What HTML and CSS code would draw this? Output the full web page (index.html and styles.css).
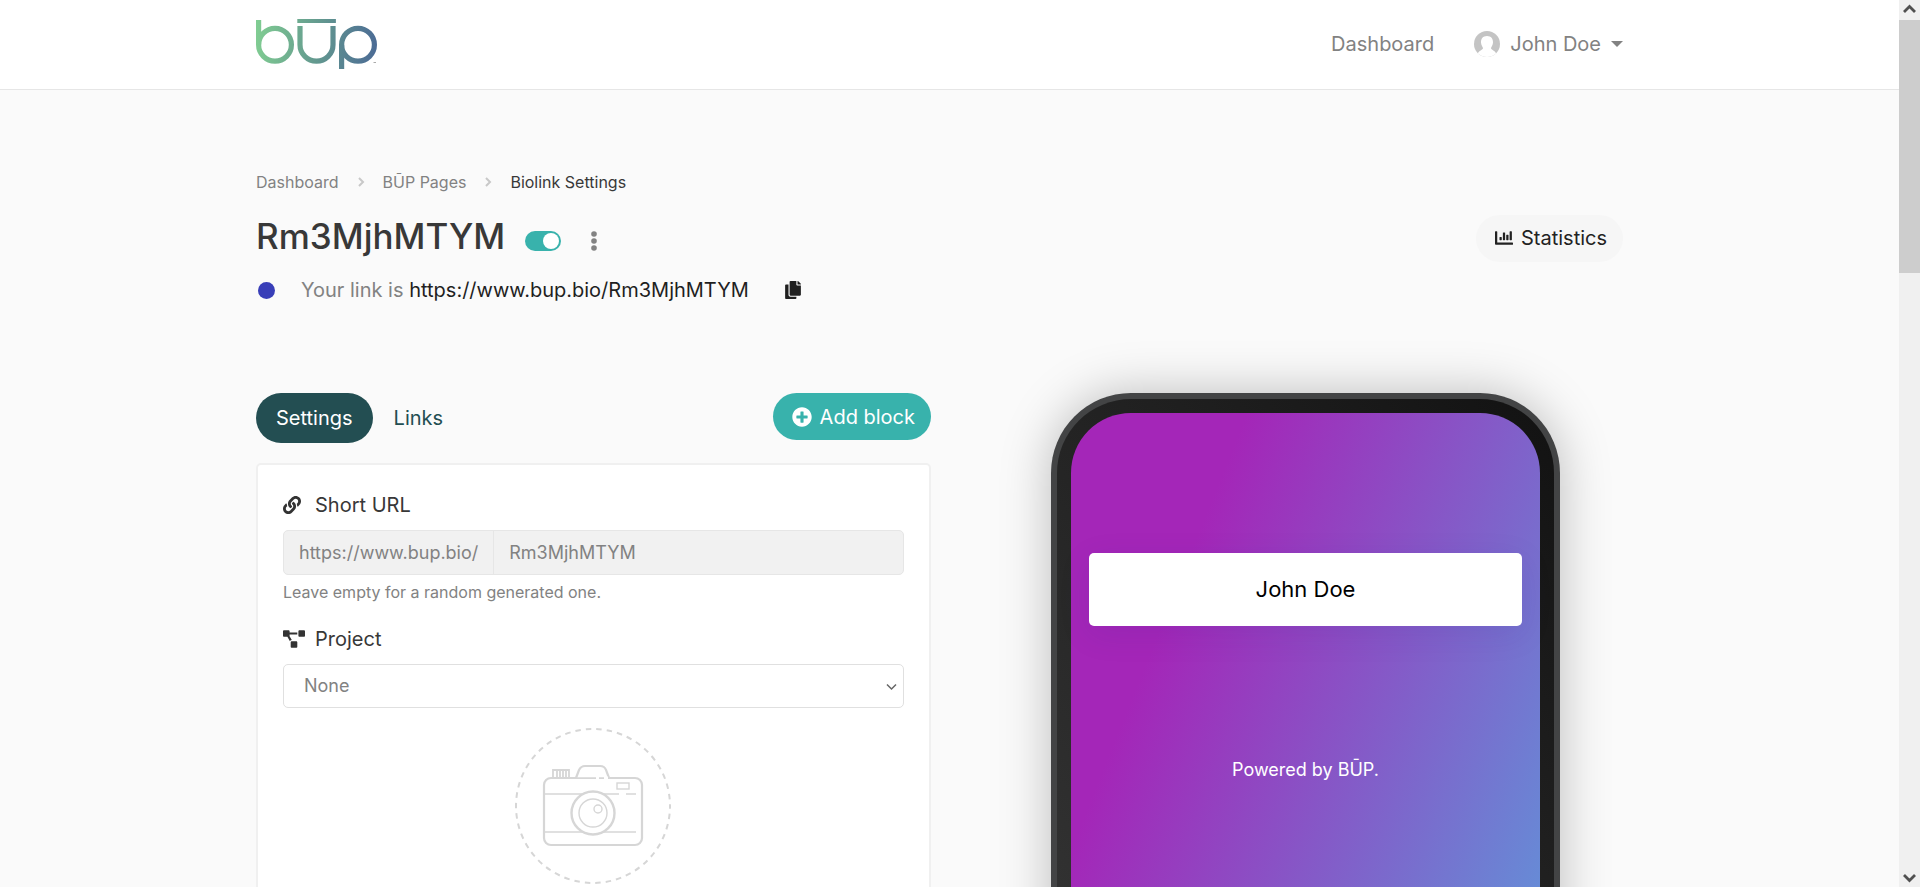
FILE: index.html
```html
<!DOCTYPE html>
<html lang="en">
<head>
<meta charset="utf-8">
<title>Biolink Settings</title>
<link rel="stylesheet" href="styles.css">
</head>
<body>
<div class="shell">
<div class="page">
  <header class="navbar">
    <div class="container navbar-inner">
      <a class="logo" href="#" aria-label="Home">
        <svg width="122" height="52" viewBox="0 0 122 52" fill="none" stroke="url(#brand)" stroke-width="5.2">
          <defs><linearGradient id="brand" gradientUnits="userSpaceOnUse" x1="0" y1="20" x2="122" y2="32"><stop offset="0" stop-color="#80cc92"/><stop offset=".5" stop-color="#63998f"/><stop offset="1" stop-color="#4b6a95"/></linearGradient></defs>
          <path d="M2.6 2v24.7"/><circle cx="19" cy="26.7" r="16.4"/>
          <path stroke-width="4.2" d="M41.3 3h38.6"/>
          <path d="M44 8v18.7a16.5 16.5 0 0 0 33 0V8"/>
          <circle cx="102" cy="26.7" r="16.4"/><path d="M85.6 26.7V51"/>
          <path stroke="#aaa" stroke-width="1" d="M117.500 44.500h2.500"/>
        </svg>
      </a>
      <nav class="nav-links">
        <a href="#">Dashboard</a>
        <a class="account" href="#">
          <svg width="26" height="26" viewBox="0 0 26 26"><defs><clipPath id="round"><circle cx="13" cy="13" r="13"/></clipPath></defs><g clip-path="url(#round)"><path fill="#c4c4c4" d="M0 0h26v26H0z"/><path fill="#fff" d="M13 5c4 0 6.200 2.800 6 6.500-.2 2.600-1.200 3.500-2 5.500 0 2 4 2 6 7l-2 2H5l-2-2c2-5 6-5 6-7-.8-2-1.800-2.900-2-5.500C6.800 7.800 9 5 13 5z"/></g></svg>
          <span>John Doe</span>
          <span class="caret"></span>
        </a>
      </nav>
    </div>
  </header>

  <main class="container main">
    <nav class="breadcrumb" aria-label="Breadcrumb">
      <a href="#">Dashboard</a>
      <svg width="7" height="10" viewBox="0 0 7 10"><path d="M1 1l4 4-4 4" fill="none" stroke="#c8c8c8" stroke-width="2"/></svg>
      <a href="#">BŪP Pages</a>
      <svg width="7" height="10" viewBox="0 0 7 10"><path d="M1 1l4 4-4 4" fill="none" stroke="#c8c8c8" stroke-width="2"/></svg>
      <span class="current">Biolink Settings</span>
    </nav>

    <div class="heading">
      <div class="heading-left">
        <h1>Rm3MjhMTYM</h1>
        <input class="switch" type="checkbox" checked aria-label="Enabled">
        <button class="icon-button" type="button" aria-label="More">
          <svg width="6" height="20" viewBox="0 0 6 20" fill="#828282"><circle cx="3" cy="3" r="2.800"/><circle cx="3" cy="10" r="2.800"/><circle cx="3" cy="17" r="2.800"/></svg>
        </button>
      </div>
      <a class="button button-light" href="#">
        <svg width="18" height="18" viewBox="0 0 512 512" fill="#222"><path d="M332.800 320h38.400c6.400 0 12.800-6.400 12.800-12.800V172.800c0-6.400-6.400-12.800-12.800-12.800h-38.400c-6.400 0-12.800 6.400-12.800 12.800v134.400c0 6.400 6.400 12.800 12.800 12.800zm96 0h38.400c6.400 0 12.800-6.400 12.800-12.800V76.800c0-6.400-6.400-12.800-12.800-12.800h-38.400c-6.400 0-12.800 6.400-12.800 12.800v230.400c0 6.400 6.400 12.800 12.800 12.800zm-288 0h38.400c6.400 0 12.800-6.400 12.800-12.800v-70.400c0-6.400-6.400-12.800-12.800-12.800h-38.400c-6.400 0-12.800 6.400-12.800 12.800v70.400c0 6.400 6.400 12.800 12.800 12.800zm96 0h38.400c6.400 0 12.800-6.400 12.800-12.800V108.800c0-6.400-6.400-12.800-12.800-12.800h-38.400c-6.400 0-12.800 6.400-12.800 12.800v198.400c0 6.400 6.400 12.800 12.800 12.800zM496 384H64V80c0-8.840-7.160-16-16-16H16C7.160 64 0 71.160 0 80v336c0 17.670 14.330 32 32 32h464c8.840 0 16-7.160 16-16v-32c0-8.840-7.160-16-16-16z"/></svg>
        <span>Statistics</span>
      </a>
    </div>

    <div class="link-row">
      <span class="dot"></span>
      <p>Your link is <a href="#">https://www.bup.bio/Rm3MjhMTYM</a></p>
      <button class="icon-button" type="button" aria-label="Copy">
        <svg width="16" height="18" viewBox="0 0 448 512" fill="#1f1f1f"><path d="M320 448v40c0 13.255-10.745 24-24 24H24c-13.255 0-24-10.745-24-24V120c0-13.255 10.745-24 24-24h72v296c0 30.879 25.121 56 56 56h168zm0-344V0H152c-13.255 0-24 10.745-24 24v368c0 13.255 10.745 24 24 24h272c13.255 0 24-10.745 24-24V128H344c-13.200 0-24-10.800-24-24zm120.971-31.029L375.029 7.029A24 24 0 0 0 358.059 0H352v96h96v-6.059a24 24 0 0 0-7.029-16.970z"/></svg>
      </button>
    </div>

    <div class="columns">
      <section>
        <div class="toolbar">
          <div class="tabs">
            <a class="tab active" href="#">Settings</a>
            <a class="tab" href="#">Links</a>
          </div>
          <button class="button button-primary" type="button">
            <svg width="20" height="20" viewBox="0 0 512 512" fill="#fff"><path d="M256 8C119 8 8 119 8 256s111 248 248 248 248-111 248-248S393 8 256 8zm144 276c0 6.600-5.400 12-12 12h-92v92c0 6.600-5.400 12-12 12h-56c-6.600 0-12-5.400-12-12v-92h-92c-6.600 0-12-5.400-12-12v-56c0-6.600 5.400-12 12-12h92v-92c0-6.600 5.400-12 12-12h56c6.600 0 12 5.400 12 12v92h92c6.600 0 12 5.400 12 12v56z"/></svg>
            <span>Add block</span>
          </button>
        </div>

        <form class="card">
          <div class="field">
            <label for="url">
              <span class="label-icon"><svg width="18" height="18" viewBox="0 0 512 512" fill="#333"><path d="M326.612 185.391c59.747 59.809 58.927 155.698.36 214.590-.11.12-.24.25-.36.370l-67.200 67.200c-59.270 59.270-155.699 59.262-214.960 0-59.270-59.260-59.270-155.700 0-214.960l37.106-37.106c9.840-9.840 26.786-3.300 27.294 10.606.648 17.722 3.826 35.527 9.690 52.721 1.986 5.822.567 12.262-3.783 16.612l-13.087 13.087c-28.026 28.026-28.905 73.660-1.155 101.960 28.024 28.579 74.086 28.749 102.325.510l67.200-67.190c28.191-28.191 28.073-73.757 0-101.830-3.701-3.694-7.429-6.564-10.341-8.569a16.037 16.037 0 0 1-6.947-12.606c-.396-10.567 3.348-21.456 11.698-29.806l21.054-21.055c5.521-5.521 14.182-6.199 20.584-1.731a152.482 152.482 0 0 1 20.522 17.197zM467.547 44.449c-59.261-59.262-155.690-59.270-214.960 0l-67.200 67.200c-.12.12-.25.25-.36.370-58.566 58.892-59.387 154.781.36 214.590a152.454 152.454 0 0 0 20.521 17.196c6.402 4.468 15.064 3.789 20.584-1.731l21.054-21.055c8.350-8.350 12.094-19.239 11.698-29.806a16.037 16.037 0 0 0-6.947-12.606c-2.912-2.005-6.640-4.875-10.341-8.569-28.073-28.073-28.191-73.639 0-101.830l67.200-67.190c28.239-28.239 74.300-28.069 102.325.510 27.750 28.300 26.872 73.934-1.155 101.960l-13.087 13.087c-4.350 4.350-5.769 10.790-3.783 16.612 5.864 17.194 9.042 34.999 9.690 52.721.509 13.906 17.454 20.446 27.294 10.606l37.106-37.106c59.271-59.259 59.271-155.699.001-214.959z"/></svg></span>
              Short URL
            </label>
            <div class="input-group">
              <span class="addon">https://www.bup.bio/</span>
              <input id="url" type="text" value="Rm3MjhMTYM">
            </div>
            <small>Leave empty for a random generated one.</small>
          </div>
          <div class="field">
            <label for="project">
              <span class="label-icon"><svg width="22" height="18" viewBox="0 0 640 512" fill="#333"><path d="M384 320H256c-17.670 0-32 14.330-32 32v128c0 17.670 14.330 32 32 32h128c17.670 0 32-14.330 32-32V352c0-17.670-14.330-32-32-32zM192 32c0-17.670-14.330-32-32-32H32C14.330 0 0 14.330 0 32v128c0 17.670 14.330 32 32 32h95.720l73.160 128.040C211.980 300.980 232.400 288 256 288h.280L192 175.510V128h224V64H192V32zM608 0H480c-17.670 0-32 14.330-32 32v128c0 17.670 14.330 32 32 32h128c17.670 0 32-14.330 32-32V32c0-17.670-14.330-32-32-32z"/></svg></span>
              Project
            </label>
            <div class="select-wrap">
              <select id="project"><option>None</option></select>
              <svg class="select-arrow" width="11" height="8" viewBox="0 0 11 8"><path d="M1 1.500l4.500 4.500L10 1.500" fill="none" stroke="#666" stroke-width="1.500"/></svg>
            </div>
          </div>
          <button class="avatar-upload" type="button" aria-label="Upload image">
            <svg width="158" height="158" viewBox="1 1 158 158" fill="none" stroke="#d6d6d6">
              <circle cx="79" cy="79" r="77" stroke-width="2" stroke-dasharray="5.500 5.022" stroke-dashoffset="2.750"/>
              <g stroke-width="2.200">
                <rect x="30" y="51" width="98" height="67" rx="7" />
                <path fill="#fff" d="M62 51l3-8c1.500-3 3.500-4 6-4h15c3 0 5 1 6 4l3 8"/>
                <path stroke-width="1.800" d="M39 50v-7h16v7M43 43v7M46 43v7M49 43v7M52 43v7"/>
              </g>
              <path stroke="#fff" stroke-width="3" d="M82 51h3M90 51h4"/>
              <g stroke-width="1.400">
                <path d="M62 51h20M85 51h5M31 67h74M112 67h10M31 105h91"/>
                <rect x="103" y="56" width="12" height="6"/>
              </g>
              <circle cx="79" cy="86" r="21.500" fill="#fff" stroke-width="2.400"/>
              <circle cx="79" cy="86" r="14" stroke-width="1.400"/>
              <circle cx="84" cy="82" r="4" stroke-width="1.400"/>
            </svg>
          </button>
        </form>
      </section>

      <aside class="preview">
        <div class="phone">
          <div class="phone-bezel">
            <div class="phone-screen">
              <a class="bio-link" href="#">John Doe</a>
              <a class="powered" href="#">Powered by BŪP.</a>
            </div>
          </div>
        </div>
      </aside>
    </div>
  </main>
</div>
<div class="scrollbar" aria-hidden="true">
  <svg width="21" height="20" viewBox="0 0 21 20"><path d="M5 12l5.500-5.500L16 12" fill="none" stroke="#505050" stroke-width="2.800"/></svg>
  <div class="scroll-thumb"></div>
  <svg class="scroll-down" width="21" height="17" viewBox="0 0 21 17"><path d="M5 5l5.500 5.500L16 5" fill="none" stroke="#505050" stroke-width="2.800"/></svg>
</div>
</div>
</body>
</html>
```
FILE: styles.css
```css
* { box-sizing: border-box; }
body {
  margin: 0;
  background: #fafafa;
  color: #383838;
  font: 400 20px/30px Inter, "Liberation Sans", sans-serif;
}
a { color: inherit; text-decoration: none; }
button, input, select { font: inherit; }
svg { display: block; flex: none; }

.shell { display: flex; height: 100vh; }
.page { flex: 1; min-width: 0; overflow: hidden; padding-right: 20px; background: #fafafa; }
.container { width: 100%; max-width: 1367px; margin: 0 auto; }

.navbar { margin-right: -20px; padding-right: 20px; background: #fff; border-bottom: 1px solid #e6e6e6; }
.navbar-inner { display: flex; align-items: center; justify-content: space-between; height: 89px; padding-bottom: 2px; }
.nav-links { display: flex; align-items: center; gap: 40px; color: #828282; }
.account { display: flex; align-items: center; gap: 10px; }
.caret { border: 6px solid transparent; border-top-color: #828282; border-bottom: 0; }

.main { padding-top: 80px; }
.breadcrumb { display: flex; align-items: center; gap: 18px; font-size: 16px; line-height: 24px; color: #828282; }
.breadcrumb svg { margin-left: 1px; }
.breadcrumb .current { color: #383838; }

.heading { display: flex; align-items: center; justify-content: space-between; margin-top: 20px; }
.heading-left { display: flex; align-items: center; gap: 20px; }
h1 { margin: 0; padding-bottom: 4px; font-size: 35px; line-height: 44px; font-weight: 500; }
.switch {
  appearance: none;
  display: flex;
  align-items: center;
  justify-content: flex-end;
  width: 36px;
  height: 20px;
  margin: 5px 0 0;
  padding: 2px;
  border-radius: 10px;
  background: #38b2ac;
}
.switch::before { content: ""; width: 16px; height: 16px; border-radius: 50%; background: #fff; }
.icon-button { padding: 0; border: 0; background: none; }
.heading .icon-button { margin: 5px 0 0 10px; }

.button { display: flex; align-items: center; gap: 8px; height: 47px; padding: 0 16px 0 19px; border: 0; border-radius: 24px; }
.button-light { background: #f6f6f6; color: #222; }
.button-primary { background: #38b2ac; color: #fff; }

.link-row { display: flex; align-items: center; margin-top: 13px; padding-left: 2px; color: #828282; }
.dot { width: 17px; height: 17px; margin-right: 26px; border-radius: 50%; background: #383eb8; }
.link-row p { margin: 0 36px 0 0; }
.link-row p a { color: #1f1f1f; }

.columns { display: grid; grid-template-columns: 675fr 635fr; gap: 57px; margin-top: 88px; }
.toolbar { display: flex; align-items: flex-start; justify-content: space-between; margin-bottom: 20px; }
.tabs { display: flex; gap: 1px; }
.tab { padding: 10px 20px; border-radius: 25px; color: #234e52; }
.tab.active { background: #234e52; color: #fff; }

.card { padding: 25px; border: 2px solid #f0f0f0; border-radius: 5px; background: #fff; }
.field { margin-bottom: 20px; }
.field label { display: flex; align-items: center; margin-bottom: 10px; }
.label-icon { width: 32px; }
.input-group { display: flex; height: 45px; border: 1px solid #e6e6e6; border-radius: 5px; background: #f1f1f1; font-size: 18px; color: #828282; }
.addon { display: flex; align-items: center; padding: 0 15px; border-right: 1px solid #e6e6e6; }
.input-group input { flex: 1; min-width: 0; padding: 0 15px; border: 0; background: none; color: inherit; }
small { display: block; margin-top: 5px; font-size: 16px; line-height: 24px; color: #828282; }
.select-wrap { position: relative; }
select { appearance: none; display: block; width: 100%; height: 44px; padding: 0 20px; border: 1px solid #e0e0e0; border-radius: 5px; background: #fff; font-size: 18px; color: #828282; }
.select-arrow { position: absolute; right: 7px; top: 19px; pointer-events: none; }
.avatar-upload { display: block; margin: 0 auto; padding: 0; border: 0; background: none; }

.preview { display: flex; justify-content: center; align-items: flex-start; }
.phone { width: 100%; max-width: 509px; padding: 6px; border-radius: 80px; background: #434445; box-shadow: 0 0 50px rgba(0, 0, 0, .25); }
.phone-bezel { padding: 14px; border-radius: 74px; background: linear-gradient(50deg, #404040, #121212); }
.phone-screen {
  display: flex;
  flex-direction: column;
  align-items: center;
  min-height: 980px;
  padding: 140px 18px;
  border-radius: 60px;
  background: linear-gradient(112deg, #a426b8 163px, #5b9edc 700px);
}
.bio-link { width: 100%; padding: 20px; border-radius: 5px; background: #fff; box-shadow: 0 8px 32px rgba(31, 38, 135, .1); color: #000; font-size: 22px; line-height: 33px; text-align: center; }
.powered { margin-top: 130px; color: #fff; font-size: 18px; line-height: 27px; }

.scrollbar { display: flex; flex-direction: column; width: 21px; background: #f0f0f0; }
.scroll-thumb { height: 253px; background: #cdcdcd; }
.scroll-down { margin-top: auto; }
```
